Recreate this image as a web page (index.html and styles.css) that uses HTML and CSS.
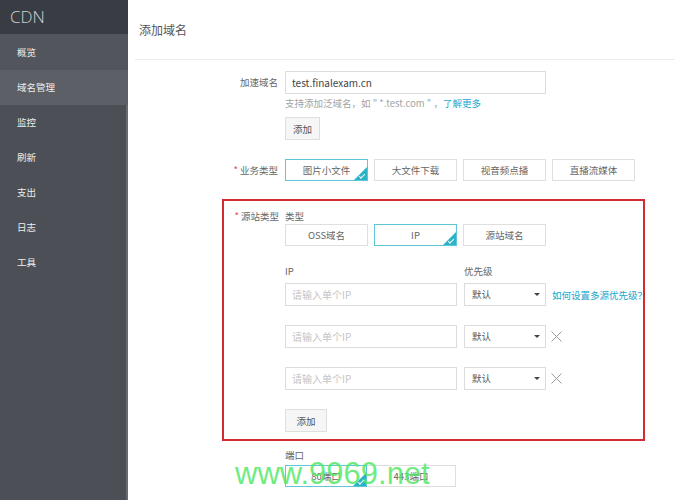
FILE: index.html
```html
<!DOCTYPE html>
<html lang="zh-CN">
<head>
    <meta charset="UTF-8">
    <meta name="viewport" content="width=device-width, initial-scale=1.0">
    <title>CDN - 添加域名</title>
    <link rel="stylesheet" href="styles.css">
</head>
<body>
    <div class="layout">
        <aside class="sidebar">
            <div class="brand">CDN</div>
            <ul class="nav">
                <li class="nav-item nav-first">概览</li>
                <li class="nav-item nav-active">域名管理</li>
                <li class="nav-item">监控</li>
                <li class="nav-item">刷新</li>
                <li class="nav-item">支出</li>
                <li class="nav-item">日志</li>
                <li class="nav-item">工具</li>
            </ul>
        </aside>

        <main class="main">
            <div class="page-head">
                <h1 class="page-title">添加域名</h1>
            </div>

            <div class="form">
                <!-- 加速域名 -->
                <div class="form-row">
                    <div class="form-label label-input">加速域名</div>
                    <div class="form-field">
                        <input type="text" class="text-input domain-input" value="test.finalexam.cn">
                        <div class="hint">支持添加泛域名，如 " *.test.com " ，<a class="link">了解更多</a></div>
                        <button class="btn btn-add">添加</button>
                    </div>
                </div>

                <!-- 业务类型 -->
                <div class="form-row row-business">
                    <div class="form-label label-option"><span class="req">*</span> 业务类型</div>
                    <div class="form-field option-group">
                        <div class="option option-selected">图片小文件</div>
                        <div class="option">大文件下载</div>
                        <div class="option">视音频点播</div>
                        <div class="option">直播流媒体</div>
                    </div>
                </div>

                <!-- 源站类型 -->
                <div class="source-box">
                    <div class="form-row">
                        <div class="form-label label-text"><span class="req">*</span> 源站类型</div>
                        <div class="form-field">
                            <div class="sub-label">类型</div>
                            <div class="option-group source-options">
                                <div class="option">OSS域名</div>
                                <div class="option option-selected">IP</div>
                                <div class="option">源站域名</div>
                            </div>

                            <div class="ip-head">
                                <div class="sub-label ip-col">IP</div>
                                <div class="sub-label">优先级</div>
                            </div>
                            <div class="ip-row ip-row-first">
                                <input type="text" class="text-input ip-input" placeholder="请输入单个IP">
                                <div class="select">默认<span class="caret"></span></div>
                                <a class="link">如何设置多源优先级？</a>
                            </div>
                            <div class="ip-row">
                                <input type="text" class="text-input ip-input" placeholder="请输入单个IP">
                                <div class="select">默认<span class="caret"></span></div>
                                <svg class="remove" width="11" height="11" viewBox="0 0 11 11"><path d="M0.5 0.5L10.5 10.5M10.5 0.5L0.5 10.5" stroke="#9a9a9a" stroke-width="1" fill="none"/></svg>
                            </div>
                            <div class="ip-row">
                                <input type="text" class="text-input ip-input" placeholder="请输入单个IP">
                                <div class="select">默认<span class="caret"></span></div>
                                <svg class="remove" width="11" height="11" viewBox="0 0 11 11"><path d="M0.5 0.5L10.5 10.5M10.5 0.5L0.5 10.5" stroke="#9a9a9a" stroke-width="1" fill="none"/></svg>
                            </div>
                            <button class="btn btn-add-ip">添加</button>
                        </div>
                    </div>
                </div>

                <!-- 端口 -->
                <div class="form-row row-port">
                    <div class="form-label"></div>
                    <div class="form-field">
                        <div class="sub-label">端口</div>
                        <div class="port-group">
                            <div class="option port-option option-selected">80端口</div>
                            <div class="option port-option port-wide">443端口</div>
                        </div>
                    </div>
                </div>
            </div>

            <div class="watermark">www.9969.net</div>
        </main>
    </div>
</body>
</html>
```

FILE: styles.css
```css
* {
    box-sizing: border-box;
}
body {
    margin: 0;
    font-family: "Noto Sans CJK SC", "Liberation Sans", sans-serif;
    font-size: 9.5px;
    line-height: 14px;
    color: #666;
    background: #fff;
}
.layout {
    display: flex;
    height: 500px;
    overflow: hidden;
}

/* sidebar */
.sidebar {
    width: 128px;
    flex-shrink: 0;
    background-color: #4c5056;
    box-shadow: inset -2px 0 0 #676b70;
}
.brand {
    height: 34px;
    line-height: 34px;
    padding-left: 10px;
    background-color: #393d43;
    color: #cfd1d4;
    font-family: "Open Sans", "Liberation Sans", sans-serif;
    font-size: 17px;
    font-weight: 300;
}
.nav {
    list-style: none;
    margin: 0;
    padding: 0;
}
.nav-item {
    height: 35px;
    line-height: 35px;
    padding-left: 17px;
    color: #eceef0;
}
.nav-first {
    height: 36px;
    line-height: 36px;
    background-color: #52565c;
}
.nav-active {
    background-color: #5c6066;
}

/* main */
.main {
    flex: 1;
    position: relative;
    padding-left: 7px;
}
.page-head {
    height: 60px;
    border-bottom: 1px solid #ececec;
}
.page-title {
    margin: 0;
    padding-left: 4px;
    line-height: 59px;
    font-size: 12px;
    font-weight: normal;
    color: #555;
}
.form {
    padding-top: 11px;
}
.form-row {
    display: flex;
}
.form-label {
    width: 150px;
    flex-shrink: 0;
    padding-right: 7px;
    text-align: right;
    color: #666;
}
.label-input {
    line-height: 23px;
}
.label-option {
    line-height: 22px;
}
.label-text {
    line-height: 14px;
}
.req {
    color: #e5404a;
}
.form-field {
    display: flex;
    flex-direction: column;
    align-items: flex-start;
}

.text-input {
    flex-shrink: 0;
    height: 23px;
    border: 1px solid #dcdcdc;
    padding: 0 6px;
    font-family: inherit;
    font-size: 10px;
    color: #444;
    outline: none;
}
.text-input::placeholder {
    color: #c4c4c4;
}
.domain-input {
    width: 261px;
}
.hint {
    margin-top: 2px;
    line-height: 14px;
    color: #a3a3a3;
}
.link {
    color: #19a6cc;
    white-space: nowrap;
}
.btn {
    height: 23px;
    border: 1px solid #dedede;
    background-color: #f6f6f6;
    font-family: inherit;
    font-size: 9.5px;
    color: #555;
    padding: 0;
}
.btn-add {
    width: 35px;
    margin-top: 7px;
}

/* option buttons */
.row-business {
    margin-top: 19px;
}
.option-group {
    flex-direction: row;
    gap: 6px;
}
.option {
    position: relative;
    flex-shrink: 0;
    width: 83px;
    height: 22px;
    line-height: 20px;
    border: 1px solid #dfdfdf;
    text-align: center;
    color: #666;
    background: #fff;
}
.option-selected {
    border-color: #5fc6d6;
}
.option-selected::after {
    content: "";
    position: absolute;
    right: 0;
    bottom: 0;
    border-left: 13px solid transparent;
    border-bottom: 13px solid #2bb3c8;
}
.option-selected::before {
    content: "";
    position: absolute;
    right: 2px;
    bottom: 3px;
    width: 5px;
    height: 2px;
    border-left: 1px solid #fff;
    border-bottom: 1px solid #fff;
    transform: rotate(-45deg);
    z-index: 1;
}

/* source box */
.source-box {
    margin-top: 18px;
    margin-left: 87px;
    width: 423px;
    padding-top: 8px;
    padding-bottom: 7px;
    border: 2px solid #d42a32;
}
.source-box .form-label {
    width: 61px;
    padding-right: 6px;
}
.sub-label {
    line-height: 14px;
    color: #666;
}
.source-options {
    display: flex;
    margin-top: 1px;
}
.ip-head {
    display: flex;
    margin-top: 18px;
}
.ip-col {
    width: 179px;
}
.ip-row {
    display: flex;
    align-items: center;
    height: 23px;
    margin-top: 19px;
}
.ip-row-first {
    margin-top: 5px;
}
.ip-input {
    width: 172px;
}
.select {
    position: relative;
    flex-shrink: 0;
    width: 82px;
    height: 23px;
    line-height: 21px;
    margin-left: 7px;
    padding-left: 7px;
    border: 1px solid #dcdcdc;
    color: #555;
}
.caret {
    position: absolute;
    right: 5px;
    top: 9px;
    border-left: 3px solid transparent;
    border-right: 3px solid transparent;
    border-top: 3px solid #444;
}
.ip-row .link {
    margin-left: 6px;
}
.remove {
    flex-shrink: 0;
    margin-left: 5px;
}
.btn-add-ip {
    width: 42px;
    margin-top: 19px;
}

/* port */
.row-port {
    margin-top: 7px;
}
.port-group {
    display: flex;
    margin-top: 3px;
}
.port-option {
    width: 82px;
}
.port-wide {
    width: 89px;
    border-left: none;
}

.watermark {
    position: absolute;
    left: 107px;
    top: 454px;
    font-family: "Liberation Sans", sans-serif;
    font-size: 31px;
    line-height: 40px;
    color: rgba(84, 232, 104, 0.85);
    white-space: nowrap;
}
```
